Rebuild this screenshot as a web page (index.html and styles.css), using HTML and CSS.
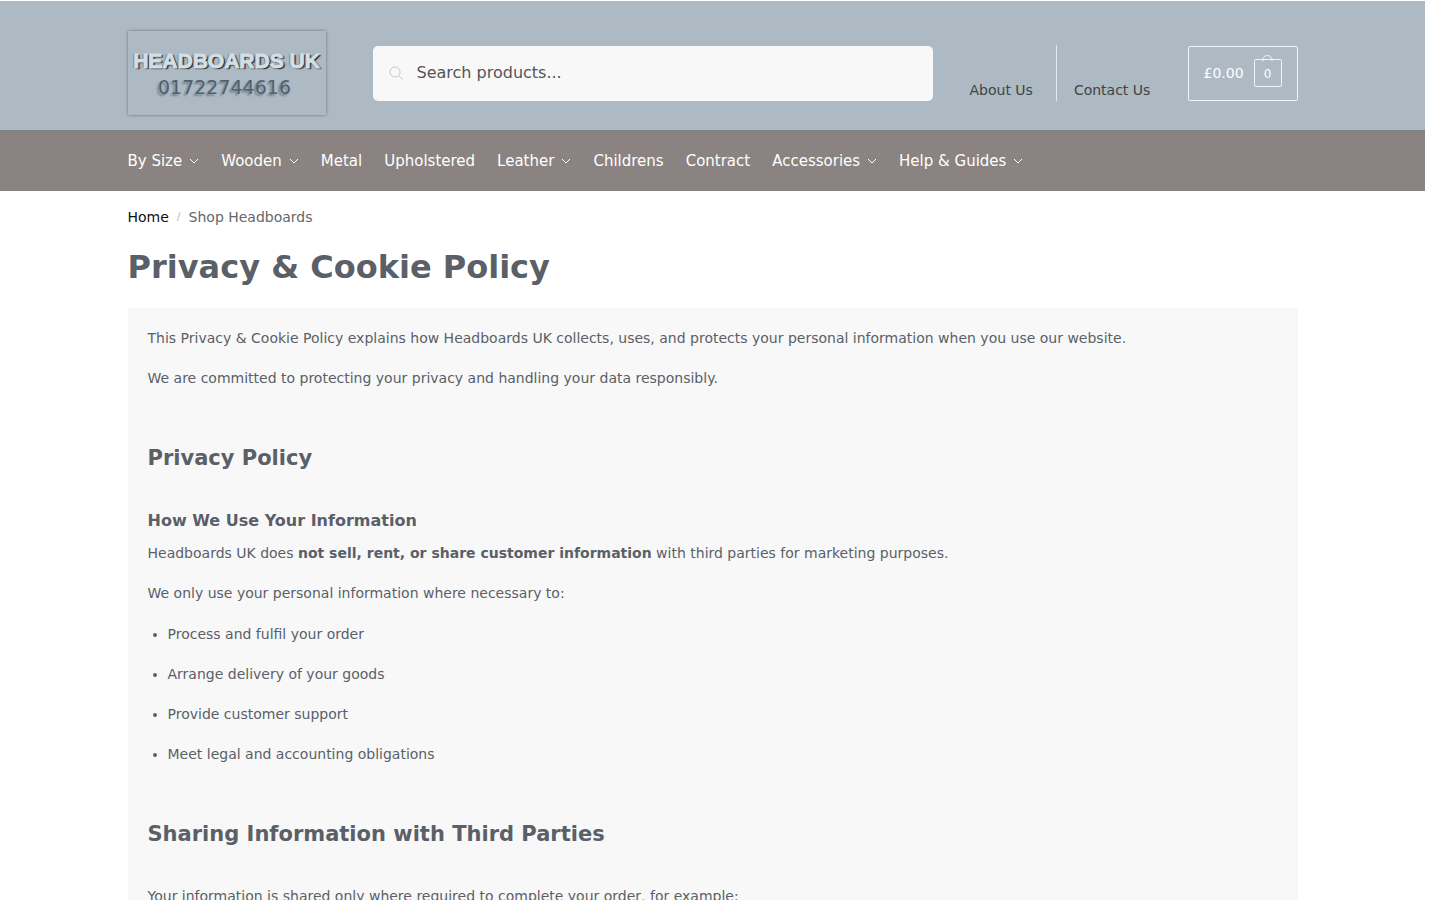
FILE: index.html
```
<!DOCTYPE html>
<html lang="en-GB">
<head>
<meta charset="utf-8">
<title>Privacy &amp; Cookie Policy - Headboards UK</title>
<link rel="stylesheet" href="styles.css">
</head>
<body>
<svg class="sprite" aria-hidden="true"><symbol id="chevron" viewBox="0 0 10 10"><path d="M1 3l4 4 4-4" fill="none" stroke="currentColor"/></symbol></svg>
<header class="header">
  <div class="wrap header-row">
    <a class="logo" href="#"><span class="logo-name">HEADBOARDS UK</span><span class="logo-phone">01722744616</span></a>
    <form class="search" role="search">
      <svg class="search-icon" viewBox="0 0 14 14" aria-hidden="true"><circle cx="6" cy="6" r="5"/><path d="M9.5 9.5l4 4"/></svg>
      <input class="search-input" type="search" aria-label="Search products" placeholder="Search products...">
    </form>
    <nav class="secondary" aria-label="Secondary">
      <a class="secondary-link" href="#">About Us</a>
      <a class="secondary-link" href="#">Contact Us</a>
    </nav>
    <a class="cart" href="#"><span class="cart-total">£0.00</span><span class="cart-bag"><svg class="cart-handle" viewBox="0 0 12 7" aria-hidden="true"><path d="M1 6.500V5a4.500 4.500 0 0 1 9 0v1.500"/></svg>0</span></a>
  </div>
</header>
<nav class="menu" aria-label="Main">
  <div class="wrap menu-row">
    <a class="menu-link" href="#">By Size<svg class="chevron"><use href="#chevron"/></svg></a>
    <a class="menu-link" href="#">Wooden<svg class="chevron"><use href="#chevron"/></svg></a>
    <a class="menu-link" href="#">Metal</a>
    <a class="menu-link" href="#">Upholstered</a>
    <a class="menu-link" href="#">Leather<svg class="chevron"><use href="#chevron"/></svg></a>
    <a class="menu-link" href="#">Childrens</a>
    <a class="menu-link" href="#">Contract</a>
    <a class="menu-link" href="#">Accessories<svg class="chevron"><use href="#chevron"/></svg></a>
    <a class="menu-link" href="#">Help &amp; Guides<svg class="chevron"><use href="#chevron"/></svg></a>
  </div>
</nav>
<main class="wrap">
  <nav class="crumbs" aria-label="Breadcrumb"><a class="crumb-home" href="#">Home</a><span class="crumb-sep">/</span><span>Shop Headboards</span></nav>
  <h1 class="title">Privacy &amp; Cookie Policy</h1>
  <article class="policy">
    <p>This Privacy &amp; Cookie Policy explains how Headboards UK collects, uses, and protects your personal information when you use our website.</p>
    <p>We are committed to protecting your privacy and handling your data responsibly.</p>
    <h2>Privacy Policy</h2>
    <h3>How We Use Your Information</h3>
    <p>Headboards UK does <strong>not sell, rent, or share customer information</strong> with third parties for marketing purposes.</p>
    <p>We only use your personal information where necessary to:</p>
    <ul>
      <li>Process and fulfil your order</li>
      <li>Arrange delivery of your goods</li>
      <li>Provide customer support</li>
      <li>Meet legal and accounting obligations</li>
    </ul>
    <h2>Sharing Information with Third Parties</h2>
    <p>Your information is shared only where required to complete your order, for example:</p>
  </article>
</main>
</body>
</html>
```
FILE: styles.css
```
* { box-sizing: border-box; }
body {
  margin: 0;
  padding: 1px 15px 0 0;
  background: #fff;
  color: #5a5f68;
  font: 14px/20px "DejaVu Sans", sans-serif;
}
a { color: inherit; text-decoration: none; }
.sprite { display: none; }
.wrap { width: 100%; max-width: 1170px; margin: 0 auto; }

.header { background: #adbac3; }
.header-row { display: flex; align-items: center; padding: 30px 0 15px; }
.logo {
  display: flex;
  flex-direction: column;
  align-items: center;
  flex: none;
  width: 198px;
  height: 84px;
  padding-top: 17px;
  margin-right: 47px;
  box-shadow: 0 0 3px #66727a;
  white-space: nowrap;
}
.logo-name {
  color: #d3dfe5;
  font: bold 21px/26px "Liberation Sans", sans-serif;
  -webkit-text-stroke: 1px #d3dfe5;
  text-shadow: 1px 1px 1px #202a31, -1px 0 1px #55626b, 2px 1px 1px #39454d;
}
.logo-phone {
  padding-right: 4px;
  color: #4f6070;
  font-size: 19px;
  line-height: 26px;
  text-shadow: -2px 2px 2px #76838c;
}
.search {
  display: flex;
  align-items: center;
  flex: 1;
  max-width: 560px;
  height: 55px;
  padding: 0 16px;
  border-radius: 5px;
  background: #f8f8f8;
}
.search-icon { width: 14px; height: 14px; margin-right: 14px; fill: none; stroke: #c8c8c8; }
.search-input {
  flex: 1;
  padding: 0;
  border: 0;
  outline: 0;
  background: none;
  color: #444;
  font: 16px/24px "DejaVu Sans", sans-serif;
}
.search-input::placeholder { color: #555; opacity: 1; }
.secondary { display: flex; margin-left: 19px; color: #3c4447; white-space: nowrap; }
.secondary-link { height: 56px; padding: 35px 23px 0 18px; }
.secondary-link + .secondary-link { padding-left: 17px; border-left: 1px solid #dfe9ee; }
.cart {
  display: flex;
  align-items: center;
  justify-content: space-between;
  width: 110px;
  height: 55px;
  margin-left: auto;
  padding: 0 15px;
  border: 1px solid #eef6fa;
  border-radius: 2px;
  color: #fff;
}
.cart-bag {
  position: relative;
  width: 28px;
  height: 28px;
  border: 1px solid #eef6fa;
  border-radius: 2px;
  font-size: 12px;
  line-height: 28px;
  text-align: center;
}
.cart-handle { position: absolute; top: -5px; left: 7px; width: 12px; height: 7px; fill: none; stroke: #eef6fa; }

.menu { background: #8a8381; border-top: 1px solid #7e828a; color: #fff; }
.menu-row { display: flex; gap: 22px; height: 60px; }
.menu-link { display: flex; align-items: center; font-size: 15px; white-space: nowrap; }
.chevron { width: 10px; height: 10px; margin-left: 7px; }

.crumbs { display: flex; gap: 8px; padding-top: 16px; color: #666; }
.crumb-home { color: #111; }
.crumb-sep { color: #bbb; font-size: 11px; }
.title { margin: 20px 0 21px; font-size: 32px; line-height: 40px; }
.policy { padding: 20px 20px 1px; background: #f8f8f8; }
.policy p, .policy ul { margin: 0 0 20px; }
.policy h2 { margin: 56px 0 38px; font-size: 21px; line-height: 28px; }
.policy h3 { margin: 0 0 11px; font-size: 16px; line-height: 22px; }
.policy ul { padding: 1px 0 0 20px; }
.policy li { margin-bottom: 20px; }
```
